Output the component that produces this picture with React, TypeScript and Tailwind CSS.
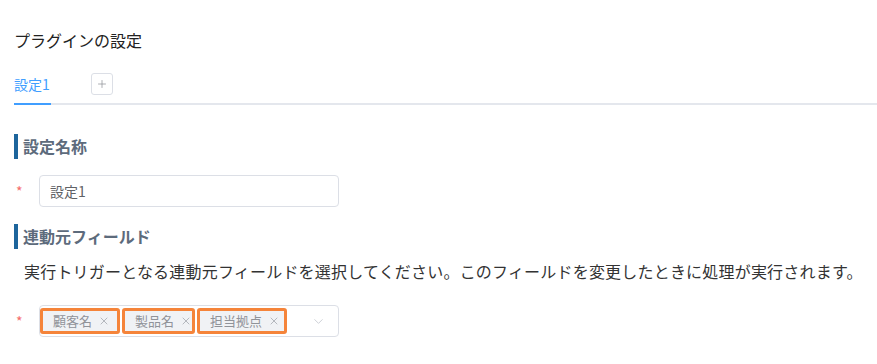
import React from "react";
import { Plus, ChevronDown, X } from "lucide-react";

const tags = [
  { label: "顧客名", w: "w-[80px]" },
  { label: "製品名", w: "w-[73px]" },
  { label: "担当拠点", w: "w-[90px]" },
];

const SectionTitle = ({ children }: { children: React.ReactNode }) => (
  <h2 className="border-l-4 border-[#1d659c] pl-[5px] text-[16px] leading-[25px] font-bold text-[#5d6b7c]">
    {children}
  </h2>
);

const App = () => {
  return (
    <div
      className="min-h-[364px] bg-white pl-[14px] pt-[28px] text-[#333]"
      style={{ fontFamily: '"Noto Sans CJK JP", "Noto Sans", sans-serif' }}
    >
      <h1 className="text-[16px] leading-[24px] text-[#222]">プラグインの設定</h1>

      <div className="mt-[13px] flex h-[40px] items-center border-b-2 border-[#e4e7ed]">
        <div className="relative flex h-full items-center">
          <span className="text-[14px] text-[#409eff]">設定1</span>
          <span className="absolute -bottom-[2px] left-0 h-[2px] w-[37px] bg-[#409eff]" />
        </div>
        <button className="ml-[41px] flex h-[22px] w-[22px] items-center justify-center rounded-[3px] border border-[#dcdfe6] text-[#909399]">
          <Plus size={12} strokeWidth={1.5} />
        </button>
      </div>

      <div className="mt-[29px]">
        <SectionTitle>設定名称</SectionTitle>
      </div>

      <div className="mt-[16px] flex items-center">
        <span className="w-[25px] pl-[2px] text-[14px] text-[#f56c6c]">*</span>
        <div className="flex h-[32px] w-[300px] items-center rounded-[4px] border border-[#dcdfe6] px-[10px] text-[14px] text-[#606266]">
          設定1
        </div>
      </div>

      <div className="mt-[17px]">
        <SectionTitle>連動元フィールド</SectionTitle>
      </div>

      <p className="mt-[10px] pl-[10px] text-[16px] leading-[24px] tracking-[0.2px] text-[#333]">
        実行トリガーとなる連動元フィールドを選択してください。このフィールドを変更したときに処理が実行されます。
      </p>

      <div className="mt-[22px] flex items-center">
        <span className="w-[25px] pl-[2px] text-[14px] text-[#f56c6c]">*</span>
        <div className="flex h-[32px] w-[300px] items-center rounded-[4px] border border-[#dcdfe6] pr-[12px]">
          <div className="flex items-center gap-[2px]">
            {tags.map((t) => (
              <span
                key={t.label}
                className={`flex h-[26px] ${t.w} shrink-0 items-center gap-[6px] whitespace-nowrap rounded-[3px] border-[3px] border-[#f5843a] bg-[#f0f2f5] pl-[10px] text-[13px] text-[#909399]`}
              >
                {t.label}
                <X size={12} strokeWidth={1.5} className="text-[#a0a4ab]" />
              </span>
            ))}
          </div>
          <ChevronDown size={15} strokeWidth={1.25} className="ml-auto text-[#c0c4cc]" />
        </div>
      </div>
    </div>
  );
};

export default App;
